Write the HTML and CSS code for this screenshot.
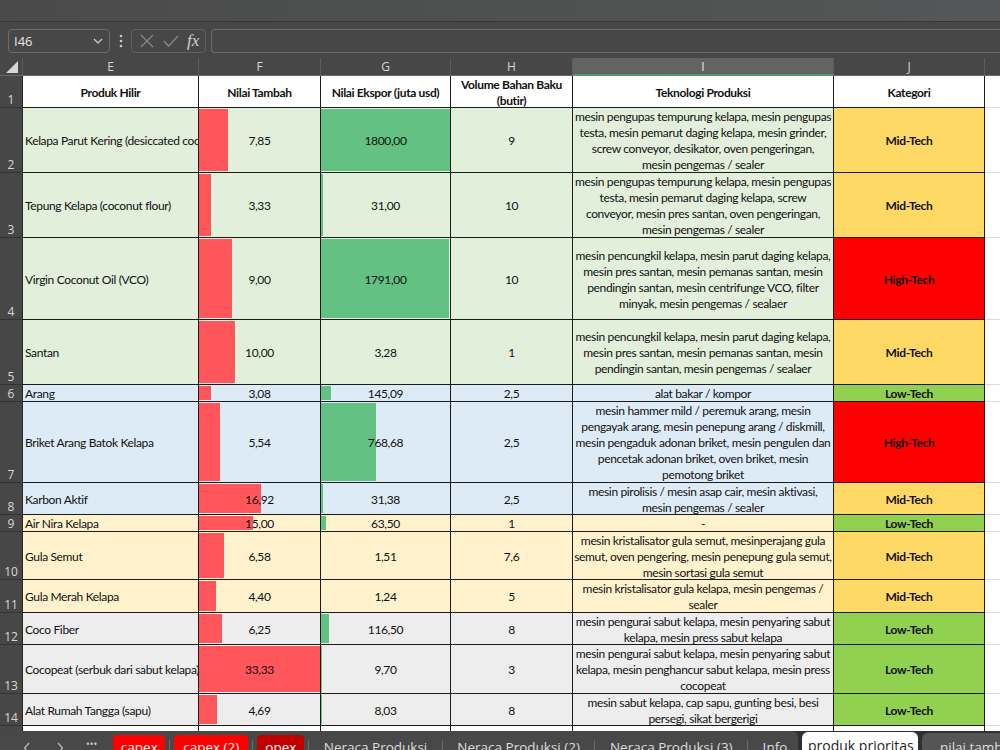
FILE: index.html
```html
<!DOCTYPE html>
<html lang="id">
	<head>
		<meta charset="UTF-8" />
		<meta name="viewport" content="width=device-width, initial-scale=1.0" />
		<title>produk prioritas</title>
		<link rel="stylesheet" href="styles.css">
	</head>
	<body>
		<div class="app">
			<div class="titlebar"></div>

			<div class="formula">
				<div class="namebox">
					<span>I46</span>
					<svg width="10" height="6" viewBox="0 0 10 6"><polyline points="1,1 5,5 9,1" fill="none" stroke="#c8c8c8" stroke-width="1.3"/></svg>
				</div>
				<svg class="dots" width="4" height="14" viewBox="0 0 4 14"><circle cx="2" cy="2" r="1.3" fill="#c8c8c8"/><circle cx="2" cy="7" r="1.3" fill="#c8c8c8"/><circle cx="2" cy="12" r="1.3" fill="#c8c8c8"/></svg>
				<div class="fxbox">
					<svg width="14" height="14" viewBox="0 0 14 14"><path d="M1 1 L13 13 M13 1 L1 13" stroke="#8a8a8a" stroke-width="1.2" fill="none"/></svg>
					<svg width="16" height="12" viewBox="0 0 16 12"><polyline points="1,6 5.5,11 15,1" fill="none" stroke="#8a8a8a" stroke-width="1.2"/></svg>
					<span class="fx">fx</span>
				</div>
				<div class="input"></div>
			</div>

			<div class="sheet">
				<!-- column letters -->
				<div class="corner"><svg width="12" height="12" viewBox="0 0 12 12"><polygon points="12,0 12,12 0,12" fill="#d6d6d6"/></svg></div>
				<div class="ch">E</div>
				<div class="ch">F</div>
				<div class="ch">G</div>
				<div class="ch">H</div>
				<div class="ch sel">I</div>
				<div class="ch">J</div>
				<div class="ch last"></div>

				<div class="row head">
					<div class="rh">1</div>
					<div class="cell">Produk Hilir</div>
					<div class="cell">Nilai Tambah</div>
					<div class="cell">Nilai Ekspor (juta usd)</div>
					<div class="cell">Volume Bahan Baku<br>(butir)</div>
					<div class="cell">Teknologi Produksi</div>
					<div class="cell">Kategori</div>
					<div class="k"></div>
				</div>

				<div class="row green">
					<div class="rh">2</div>
					<div class="cell name">Kelapa Parut Kering (desiccated coconut)</div>
					<div class="cell bar-red" style="--w:29px">7,85</div>
					<div class="cell bar-green" style="--w:129px">1800,00</div>
					<div class="cell">9</div>
					<div class="cell">mesin pengupas tempurung kelapa, mesin pengupas<br>testa, mesin pemarut daging kelapa, mesin grinder,<br>screw conveyor, desikator, oven pengeringan,<br>mesin pengemas / sealer</div>
					<div class="cell kat mid">Mid-Tech</div>
					<div class="k"></div>
				</div>

				<div class="row green">
					<div class="rh">3</div>
					<div class="cell name">Tepung Kelapa (coconut flour)</div>
					<div class="cell bar-red" style="--w:12px">3,33</div>
					<div class="cell bar-green" style="--w:2px">31,00</div>
					<div class="cell">10</div>
					<div class="cell">mesin pengupas tempurung kelapa, mesin pengupas<br>testa, mesin pemarut daging kelapa, screw<br>conveyor, mesin pres santan, oven pengeringan,<br>mesin pengemas / sealer</div>
					<div class="cell kat mid">Mid-Tech</div>
					<div class="k"></div>
				</div>

				<div class="row green">
					<div class="rh">4</div>
					<div class="cell name">Virgin Coconut Oil (VCO)</div>
					<div class="cell bar-red" style="--w:33px">9,00</div>
					<div class="cell bar-green" style="--w:128px">1791,00</div>
					<div class="cell">10</div>
					<div class="cell">mesin pencungkil kelapa, mesin parut daging kelapa,<br>mesin pres santan, mesin pemanas santan, mesin<br>pendingin santan, mesin centrifunge VCO, filter<br>minyak, mesin pengemas / sealaer</div>
					<div class="cell kat high">High-Tech</div>
					<div class="k"></div>
				</div>

				<div class="row green">
					<div class="rh">5</div>
					<div class="cell name">Santan</div>
					<div class="cell bar-red" style="--w:36px">10,00</div>
					<div class="cell">3,28</div>
					<div class="cell">1</div>
					<div class="cell">mesin pencungkil kelapa, mesin parut daging kelapa,<br>mesin pres santan, mesin pemanas santan, mesin<br>pendingin santan, mesin pengemas / sealaer</div>
					<div class="cell kat mid">Mid-Tech</div>
					<div class="k"></div>
				</div>

				<div class="row blue">
					<div class="rh">6</div>
					<div class="cell name">Arang</div>
					<div class="cell bar-red" style="--w:12px">3,08</div>
					<div class="cell bar-green" style="--w:10px">145,09</div>
					<div class="cell">2,5</div>
					<div class="cell">alat bakar / kompor</div>
					<div class="cell kat low">Low-Tech</div>
					<div class="k"></div>
				</div>

				<div class="row blue">
					<div class="rh">7</div>
					<div class="cell name">Briket Arang Batok Kelapa</div>
					<div class="cell bar-red" style="--w:21px">5,54</div>
					<div class="cell bar-green" style="--w:55px">768,68</div>
					<div class="cell">2,5</div>
					<div class="cell">mesin hammer mild / peremuk arang, mesin<br>pengayak arang, mesin penepung arang / diskmill,<br>mesin pengaduk adonan briket, mesin pengulen dan<br>pencetak adonan briket, oven briket, mesin<br>pemotong briket</div>
					<div class="cell kat high">High-Tech</div>
					<div class="k"></div>
				</div>

				<div class="row blue">
					<div class="rh">8</div>
					<div class="cell name">Karbon Aktif</div>
					<div class="cell bar-red" style="--w:62px">16,92</div>
					<div class="cell bar-green" style="--w:2px">31,38</div>
					<div class="cell">2,5</div>
					<div class="cell">mesin pirolisis / mesin asap cair, mesin aktivasi,<br>mesin pengemas / sealer</div>
					<div class="cell kat mid">Mid-Tech</div>
					<div class="k"></div>
				</div>

				<div class="row yellow">
					<div class="rh">9</div>
					<div class="cell name">Air Nira Kelapa</div>
					<div class="cell bar-red" style="--w:54px">15,00</div>
					<div class="cell bar-green" style="--w:5px">63,50</div>
					<div class="cell">1</div>
					<div class="cell">-</div>
					<div class="cell kat low">Low-Tech</div>
					<div class="k"></div>
				</div>

				<div class="row yellow">
					<div class="rh">10</div>
					<div class="cell name">Gula Semut</div>
					<div class="cell bar-red" style="--w:25px">6,58</div>
					<div class="cell">1,51</div>
					<div class="cell">7,6</div>
					<div class="cell">mesin kristalisator gula semut, mesinperajang gula<br>semut, oven pengering, mesin penepung gula semut,<br>mesin sortasi gula semut</div>
					<div class="cell kat mid">Mid-Tech</div>
					<div class="k"></div>
				</div>

				<div class="row yellow">
					<div class="rh">11</div>
					<div class="cell name">Gula Merah Kelapa</div>
					<div class="cell bar-red" style="--w:17px">4,40</div>
					<div class="cell">1,24</div>
					<div class="cell">5</div>
					<div class="cell">mesin kristalisator gula kelapa, mesin pengemas /<br>sealer</div>
					<div class="cell kat mid">Mid-Tech</div>
					<div class="k"></div>
				</div>

				<div class="row grey">
					<div class="rh">12</div>
					<div class="cell name">Coco Fiber</div>
					<div class="cell bar-red" style="--w:23px">6,25</div>
					<div class="cell bar-green" style="--w:8px">116,50</div>
					<div class="cell">8</div>
					<div class="cell">mesin pengurai sabut kelapa, mesin penyaring sabut<br>kelapa, mesin press sabut kelapa</div>
					<div class="cell kat low">Low-Tech</div>
					<div class="k"></div>
				</div>

				<div class="row grey">
					<div class="rh">13</div>
					<div class="cell name">Cocopeat (serbuk dari sabut kelapa)</div>
					<div class="cell bar-red" style="--w:121px">33,33</div>
					<div class="cell bar-green" style="--w:1px">9,70</div>
					<div class="cell">3</div>
					<div class="cell">mesin pengurai sabut kelapa, mesin penyaring sabut<br>kelapa, mesin penghancur sabut kelapa, mesin press<br>cocopeat</div>
					<div class="cell kat low">Low-Tech</div>
					<div class="k"></div>
				</div>

				<div class="row grey">
					<div class="rh">14</div>
					<div class="cell name">Alat Rumah Tangga (sapu)</div>
					<div class="cell bar-red" style="--w:18px">4,69</div>
					<div class="cell bar-green" style="--w:1px">8,03</div>
					<div class="cell">8</div>
					<div class="cell">mesin sabut kelapa, cap sapu, gunting besi, besi<br>persegi, sikat bergerigi</div>
					<div class="cell kat low">Low-Tech</div>
					<div class="k"></div>
				</div>

				<div class="row blank">
					<div class="rh">15</div>
					<div class="cell"></div>
					<div class="cell"></div>
					<div class="cell"></div>
					<div class="cell"></div>
					<div class="cell"></div>
					<div class="cell"></div>
					<div class="k"></div>
				</div>
			</div>

			<div class="tabbar">
				<div class="tabgroup">
					<svg class="nav" width="8" height="12" viewBox="0 0 8 12"><polyline points="6,1 1.5,6 6,11" fill="none" stroke="#bdbdbd" stroke-width="1.2"/></svg>
					<svg class="nav" width="8" height="12" viewBox="0 0 8 12"><polyline points="2,1 6.5,6 2,11" fill="none" stroke="#bdbdbd" stroke-width="1.2"/></svg>
					<span class="more">•••</span>
					<div class="tab red w52">capex</div>
					<span class="sep"></span>
					<div class="tab red w74">capex (2)</div>
					<span class="sep"></span>
					<div class="tab darkred w47">opex</div>
					<span class="sep"></span>
					<div class="tab">Neraca Produksi</div>
					<span class="sep"></span>
					<div class="tab">Neraca Produksi (2)</div>
					<span class="sep"></span>
					<div class="tab">Neraca Produksi (3)</div>
					<span class="sep"></span>
					<div class="tab">Info</div>
				</div>
				<div class="tab active">produk prioritas</div>
				<div class="tabgroup after">
					<div class="tab">nilai tambah</div>
				</div>
			</div>
		</div>
	</body>
</html>
```

FILE: styles.css
```css
* {
	box-sizing: border-box;
}
body {
	margin: 0;
	width: 1000px;
	height: 750px;
	overflow: hidden;
	background: #474747;
	font-family: "Open Sans", "Noto Sans", sans-serif;
}
.app {
	display: flex;
	flex-direction: column;
	height: 750px;
}

/* ribbon remains + formula bar */
.titlebar {
	flex: none;
	height: 22px;
	background: linear-gradient(to right, #4a4a4a, #545757);
	border-bottom: 1px solid #383838;
}
.formula {
	flex: none;
	height: 36px;
	display: flex;
	align-items: flex-start;
	padding-top: 7px;
	background: #474747;
}
.namebox {
	margin-left: 8px;
	width: 102px;
	height: 24px;
	border: 1px solid #6c6c6c;
	border-radius: 4px;
	display: flex;
	align-items: center;
	justify-content: space-between;
	padding: 0 6px 0 5px;
	color: #e6e6e6;
	font-size: 13px;
}
.dots {
	margin: 5px 8px 0 9px;
}
.fxbox {
	width: 75px;
	height: 24px;
	border: 1px solid #606060;
	border-radius: 4px;
	display: flex;
	align-items: center;
	gap: 9px;
	padding-left: 8px;
}
.fx {
	font-family: "Liberation Serif", serif;
	font-style: italic;
	font-size: 17px;
	color: #d0d0d0;
	margin-left: -1px;
}
.input {
	margin-left: 5px;
	flex: 1;
	height: 24px;
	border: 1px solid #6c6c6c;
	border-right: none;
	border-radius: 4px 0 0 4px;
}

/* grid */
.sheet {
	flex: none;
	height: 673px;
	overflow: hidden;
	display: grid;
	grid-template-columns: 23px 176px 122px 130px 122px 261px 151px 1fr;
	grid-template-rows: 18px 32px 65px 65px 82px 65px 17px 81px 32px 17px 48px 33px 32px 49px 32px 20px;
	background: #fff;
	font-family: Lato, "Liberation Sans", sans-serif;
	font-size: 12px;
	letter-spacing: -0.35px;
	line-height: 16px;
	color: #111;
}
.row {
	display: contents;
}
.corner {
	background: #474747;
	border-right: 1px solid #5c5c5c;
	border-bottom: 1px solid #6a6a6a;
	padding: 3px 0 0 6px;
}
.ch {
	background: #474747;
	color: #d6d6d6;
	font-family: "Open Sans", sans-serif;
	font-size: 12px;
	letter-spacing: 0;
	line-height: 17px;
	text-align: center;
	border-right: 1px solid #5c5c5c;
	border-bottom: 1px solid #6a6a6a;
}
.ch.sel {
	background: #636363;
	border-bottom: 2px solid #4f9a6c;
	color: #e8e8e8;
}
.ch.last {
	border-right: none;
}
.rh {
	background: #474747;
	color: #d8d8d8;
	font-family: "Open Sans", sans-serif;
	font-size: 12px;
	letter-spacing: 0;
	line-height: 15px;
	display: flex;
	align-items: flex-end;
	justify-content: center;
	border-right: 1px solid #262626;
	border-bottom: 1px solid #333;
}
.cell {
	border-right: 1px solid #1c1c1c;
	border-bottom: 1px solid #1c1c1c;
	padding-top: 2px;
	display: flex;
	align-items: center;
	justify-content: center;
	text-align: center;
	white-space: nowrap;
	overflow: hidden;
}
.k {
	border-bottom: 1px solid #dcdcdc;
	background: #fff;
}

/* row fills */
.head .cell {
	background: #fff;
	font-weight: bold;
}
.green .cell {
	background-color: #e2efda;
}
.blue .cell {
	background-color: #ddebf7;
}
.yellow .cell {
	background-color: #fff2cc;
}
.grey .cell {
	background-color: #ededed;
}
.blank .cell {
	border-bottom: none;
}
.cell.name {
	justify-content: flex-start;
	padding-left: 2px;
}

/* data bars, width from value */
.bar-red,
.bar-green {
	background-repeat: no-repeat;
	background-position: 0 1px;
	background-size: var(--w) calc(100% - 2px);
}
.bar-red {
	background-image: linear-gradient(#ff565b, #ff565b);
}
.bar-green {
	background-image: linear-gradient(#63c283, #63c283);
}

.kat {
	font-weight: bold;
}
.green .mid, .blue .mid, .yellow .mid {
	background-color: #ffd966;
}
.green .high, .blue .high {
	background-color: #ff0000;
}
.blue .low, .yellow .low, .grey .low {
	background-color: #92d050;
}

/* sheet tabs */
.tabbar {
	flex: none;
	height: 19px;
	overflow: hidden;
	display: flex;
	align-items: flex-start;
	background: #303030;
	color: #dedede;
	font-size: 13.5px;
}
.tabbar > * {
	flex: none;
}
.tabgroup {
	display: flex;
	align-items: flex-start;
	width: 798px;
	height: 30px;
	background: #484848;
	border-radius: 0 6px 0 0;
	padding-left: 23px;
}
.tabgroup > * {
	flex: none;
}
.tabgroup.after {
	width: auto;
	flex: 1;
	margin-left: 4px;
	padding-left: 0;
	margin-top: 2px;
	background: #555;
	border-radius: 6px 0 0 0;
}
.nav {
	margin: 11px 25px 0 0;
}
.more {
	margin: 8px 16px 0 -3px;
	font-size: 10px;
	line-height: 10px;
	color: #cfcfcf;
}
.tab {
	margin-top: 4px;
	padding: 2px 10.5px 0;
	height: 26px;
	line-height: 20px;
	white-space: nowrap;
}
.tab.red,
.tab.darkred {
	padding: 2px 0 0;
	text-align: center;
	background: #ff0000;
	color: #fff;
	border-radius: 4px 4px 0 0;
}
.tab.darkred {
	background: #c00000;
}
.w52 {
	width: 52px;
}
.w74 {
	width: 74px;
}
.w47 {
	width: 47px;
}
.sep {
	width: 1px;
	height: 14px;
	margin: 9px 4px 0;
	background: #6a6a6a;
}
.tab.active {
	margin: 1px 0 0 4px;
	padding: 4px 6px 0;
	width: 116px;
	background: #fff;
	color: #1e1e1e;
	font-size: 14px;
	border-radius: 6px 6px 0 0;
}
.after .tab {
	margin-top: 2px;
	padding: 2px 18px 0;
}
```
